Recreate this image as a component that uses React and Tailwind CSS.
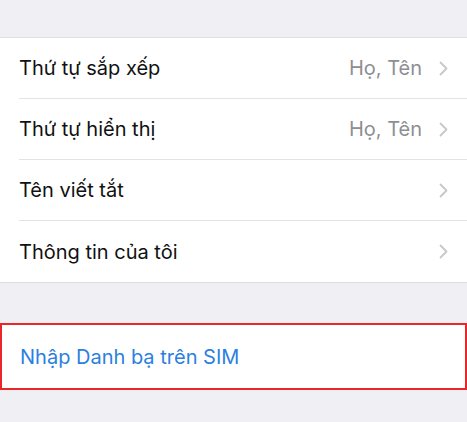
import React from "react";

const rows = [
  { label: "Thứ tự sắp xếp", value: "Họ, Tên" },
  { label: "Thứ tự hiển thị", value: "Họ, Tên" },
  { label: "Tên viết tắt", value: "" },
  { label: "Thông tin của tôi", value: "" },
];

const Chevron = () => (
  <svg width="9" height="15" viewBox="0 0 9 15" fill="none" className="shrink-0">
    <path d="M1.5 1.5L7.5 7.5L1.5 13.5" stroke="#c7c7cc" strokeWidth="1.8" strokeLinecap="round" strokeLinejoin="round" />
  </svg>
);

export default function App() {
  return (
    <div
      className="w-[467px] h-[422px] bg-[#efeff4] overflow-hidden"
      style={{ fontFamily: "Inter, 'Noto Sans', sans-serif" }}
    >
      <div className="h-[38px] border-b border-[#e0e0e5]" />

      {/* settings list */}
      <div className="bg-white border-b border-[#dcdce0]">
        {rows.map((row, i) => (
          <div key={row.label} className="pl-[19px]">
            <div
              className={
                "h-[61px] flex items-center pr-[19px] " +
                (i < rows.length - 1 ? "border-b border-[#e3e3e6]" : "")
              }
            >
              <span className="text-[20px] text-[#111] flex-1">{row.label}</span>
              {row.value && (
                <span className="text-[20px] text-[#8e8e93] mr-[17px]">{row.value}</span>
              )}
              <Chevron />
            </div>
          </div>
        ))}
      </div>

      <div className="h-[40px]" />

      {/* SIM import */}
      <div className="h-[67px] bg-white border-2 border-[#e8262b] flex items-center pl-[18px]">
        <span className="text-[20px] text-[#2b7fe0]">Nhập Danh bạ trên SIM</span>
      </div>
    </div>
  );
}
